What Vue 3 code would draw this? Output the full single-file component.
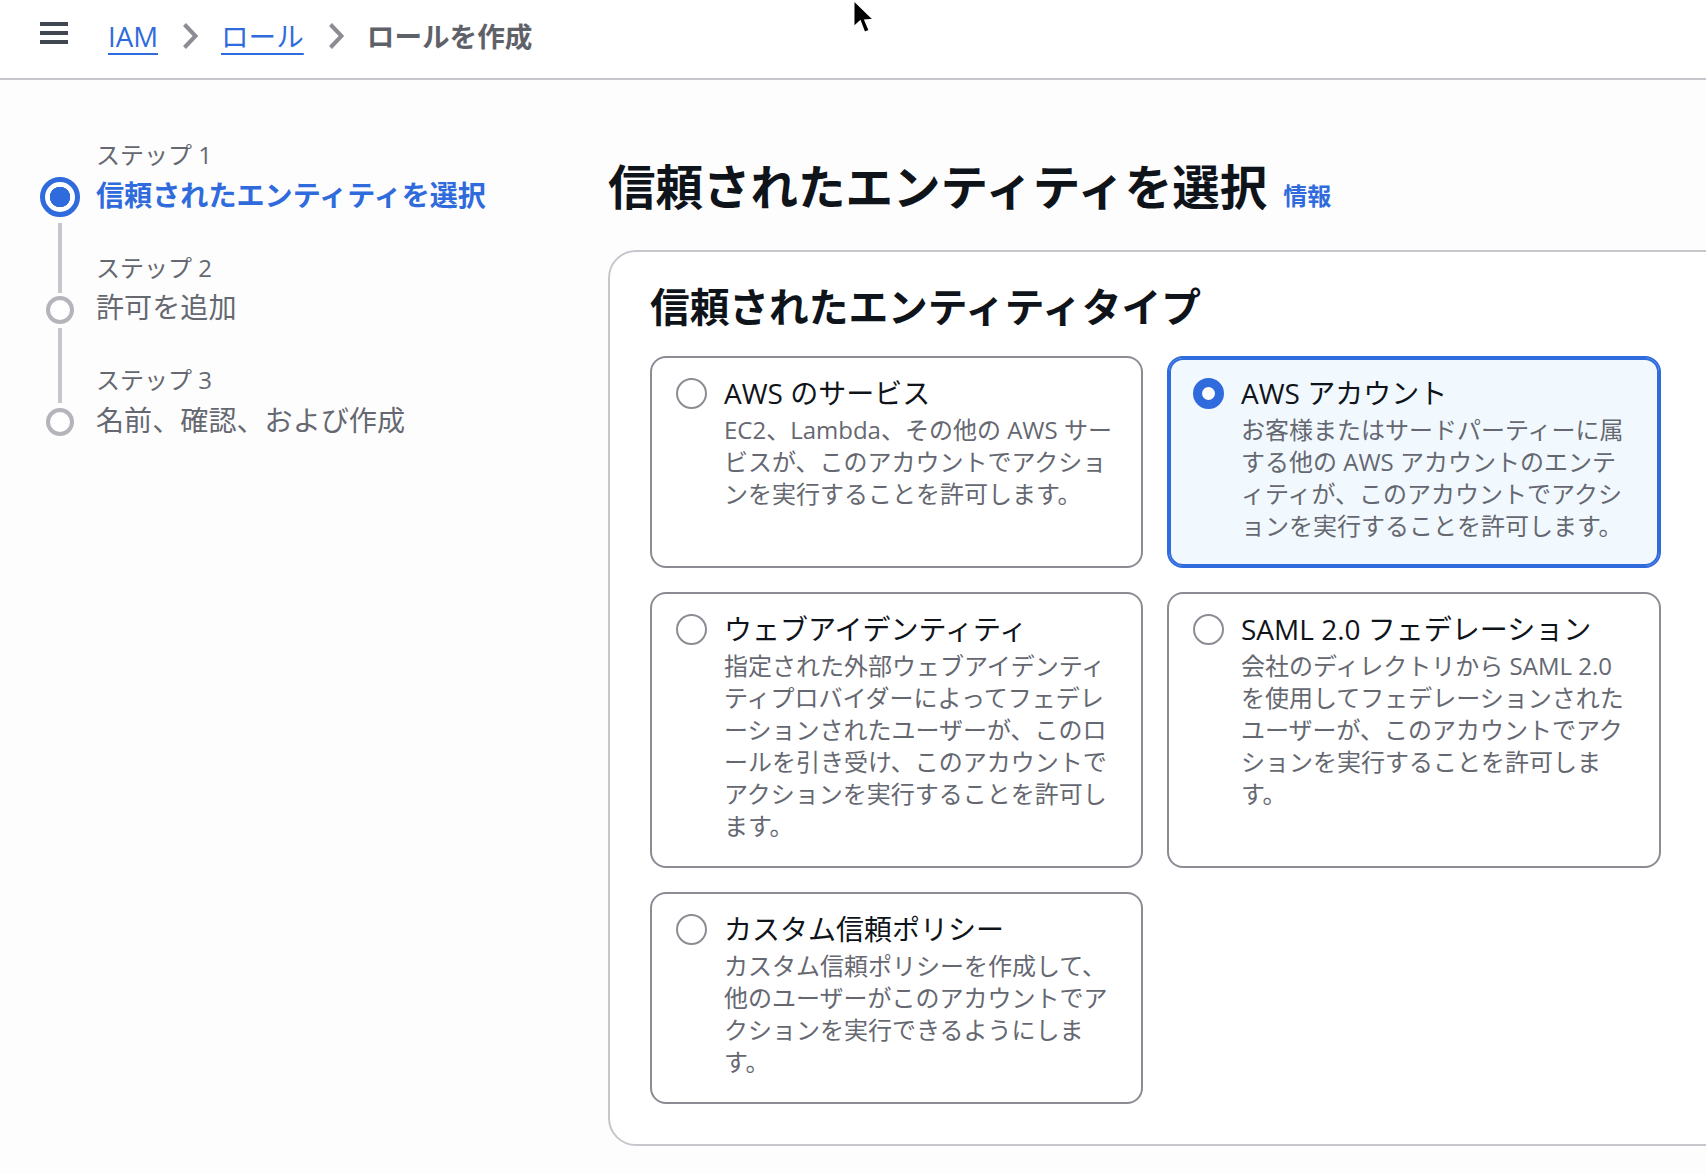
<template>
  <div class="page">
    <header class="topbar">
      <div class="menu-icon"><span></span><span></span><span></span></div>
      <nav class="crumbs">
        <a class="crumb-link">IAM</a>
        <svg class="chevron" viewBox="0 0 16 28"><path d="M2.5 2.5 L13.5 14 L2.5 25.5" /></svg>
        <a class="crumb-link">ロール</a>
        <svg class="chevron" viewBox="0 0 16 28"><path d="M2.5 2.5 L13.5 14 L2.5 25.5" /></svg>
        <span class="crumb-current">ロールを作成</span>
      </nav>
    </header>

    <div class="content">
      <aside class="steps">
        <div
          v-for="(step, index) in steps"
          :key="index"
          class="step"
          :class="{ active: index === 0 }"
        >
          <div class="step-no">ステップ {{ index + 1 }}</div>
          <div class="step-row">
            <div class="step-mark"><i class="step-dot"></i></div>
            <div class="step-label">{{ step }}</div>
          </div>
        </div>
      </aside>

      <main class="main">
        <div class="title-row">
          <h1>信頼されたエンティティを選択</h1>
          <a class="info">情報</a>
        </div>

        <section class="panel">
          <h2>信頼されたエンティティタイプ</h2>
          <div class="tiles">
            <div
              v-for="tile in tiles"
              :key="tile.title"
              class="tile"
              :class="{ selected: tile.selected }"
            >
              <div class="radio"></div>
              <div class="tile-text">
                <div class="tile-title">{{ tile.title }}</div>
                <div class="tile-desc">{{ tile.desc }}</div>
              </div>
            </div>
          </div>
        </section>
      </main>
    </div>

    <svg class="cursor" viewBox="0 0 24 36">
      <path d="M2 1 L2 26 L8 20.5 L12 31 L16.5 29 L12.5 19.5 L20.5 19 Z" />
    </svg>
  </div>
</template>

<script setup>
const steps = ["信頼されたエンティティを選択", "許可を追加", "名前、確認、および作成"];

// line breaks follow the screenshot
const tiles = [
  {
    title: "AWS のサービス",
    desc: "EC2、Lambda、その他の AWS サー\nビスが、このアカウントでアクショ\nンを実行することを許可します。",
  },
  {
    title: "AWS アカウント",
    selected: true,
    desc: "お客様またはサードパーティーに属\nする他の AWS アカウントのエンテ\nィティが、このアカウントでアクシ\nョンを実行することを許可します。",
  },
  {
    title: "ウェブアイデンティティ",
    desc: "指定された外部ウェブアイデンティ\nティプロバイダーによってフェデレ\nーションされたユーザーが、このロ\nールを引き受け、このアカウントで\nアクションを実行することを許可し\nます。",
  },
  {
    title: "SAML 2.0 フェデレーション",
    desc: "会社のディレクトリから SAML 2.0\nを使用してフェデレーションされた\nユーザーが、このアカウントでアク\nションを実行することを許可しま\nす。",
  },
  {
    title: "カスタム信頼ポリシー",
    desc: "カスタム信頼ポリシーを作成して、\n他のユーザーがこのアカウントでア\nクションを実行できるようにしま\nす。",
  },
];
</script>

<style>
html,
body {
  background: #fdfdfd;
  overflow: hidden;
}
</style>

<style scoped>
.page {
  position: relative;
  width: 1706px;
  height: 1174px;
  overflow: hidden;
  background: #fdfdfd;
  color: #0f141a;
  font-family: "Open Sans", "Noto Sans CJK JP", sans-serif;
}

.topbar {
  display: flex;
  align-items: center;
  height: 78px;
  padding-left: 40px;
  background: #fff;
  border-bottom: 2px solid #c6c6cd;
  box-sizing: content-box;
}

.menu-icon {
  display: flex;
  flex-direction: column;
  gap: 5px;
  width: 28px;
  margin-top: -12px;
}

.menu-icon span {
  height: 4px;
  background: #414750;
}

.crumbs {
  display: flex;
  align-items: center;
  margin-left: 40px;
  font-size: 27.6px;
  line-height: 40px;
  margin-top: -6px;
}

.crumb-link {
  color: #2f6bdc;
  text-decoration: underline;
  text-decoration-thickness: 2px;
  text-underline-offset: 6px;
}

.crumb-current {
  color: #5f6169;
  font-weight: 700;
}

.chevron {
  width: 16px;
  height: 28px;
  margin: 0 23px 0 24px;
  fill: none;
  stroke: #8c8c94;
  stroke-width: 4;
}

.content {
  display: grid;
  grid-template-columns: 608px 1140px;
}

.steps {
  padding: 57px 0 0 40px;
  display: flex;
  flex-direction: column;
  gap: 32.5px;
}

.step {
  position: relative;
  height: 80px;
}

.step + .step::before {
  content: "";
  position: absolute;
  left: 18px;
  top: -27px;
  width: 4px;
  height: 70px;
  background: #c6c6cd;
}

.step:last-child::before {
  top: -34px;
  height: 75px;
}

.step-no {
  margin: -2px 0 2px 56px;
  font-size: 24px;
  line-height: 40px;
  color: #656871;
}

.step-row {
  display: flex;
  align-items: center;
  height: 40px;
}

.step-mark {
  display: flex;
  align-items: center;
  justify-content: center;
  width: 40px;
  height: 40px;
  margin-right: 16px;
}

.step-dot {
  display: block;
  box-sizing: border-box;
  width: 28px;
  height: 28px;
  border: 4px solid #b4b4bb;
  border-radius: 50%;
  background: #fff;
}

.step-label {
  margin-top: -5px;
  font-size: 28.1px;
  line-height: 40px;
  color: #656871;
}

.step.active .step-label {
  color: #2f6bdc;
  font-weight: 700;
}

.step.active .step-dot {
  width: 40px;
  height: 40px;
  border: 5px solid #2f6bdc;
  background: radial-gradient(circle, #2f6bdc 0 10px, #fff 10.5px);
}

.main {
  padding-top: 77px;
}

.title-row {
  display: flex;
  align-items: center;
  height: 60px;
  margin-bottom: 33px;
}

h1 {
  margin: 0;
  font-size: 47.5px;
  line-height: 60px;
  font-weight: 700;
}

.info {
  margin: 14px 0 0 16px;
  font-size: 24px;
  font-weight: 700;
  color: #2f6bdc;
}

.panel {
  border: 2px solid #c6c6cd;
  border-radius: 28px;
  padding: 29px 40px 40px;
  background: #fff;
}

h2 {
  margin: 0 0 23px;
  font-size: 39.7px;
  line-height: 52px;
  font-weight: 700;
}

.tiles {
  display: grid;
  grid-template-columns: 493px 494px;
  column-gap: 24px;
  row-gap: 24px;
}

.tile {
  display: flex;
  gap: 17px;
  padding: 17px 24px 24px;
  border: 2px solid #8c8c94;
  border-radius: 16px;
  background: #fff;
}

.tile.selected {
  border-color: #2f6bdc;
  box-shadow: inset 0 0 0 2px #2f6bdc;
  background: #f2f9fe;
}

.radio {
  box-sizing: border-box;
  flex: none;
  width: 31px;
  height: 31px;
  margin-top: 3px;
  border: 2px solid #8c8c94;
  border-radius: 50%;
  background: #fff;
}

.selected .radio {
  border: 9px solid #2f6bdc;
}

.tile-title {
  font-size: 28px;
  line-height: 36px;
  margin-bottom: 3px;
}

.tile-desc {
  font-size: 24px;
  line-height: 32px;
  color: #656871;
  white-space: pre-line;
}

.cursor {
  position: absolute;
  left: 851px;
  top: -1px;
  width: 27px;
  height: 39px;
  fill: #000;
  stroke: #fff;
  stroke-width: 1.5;
}
</style>
